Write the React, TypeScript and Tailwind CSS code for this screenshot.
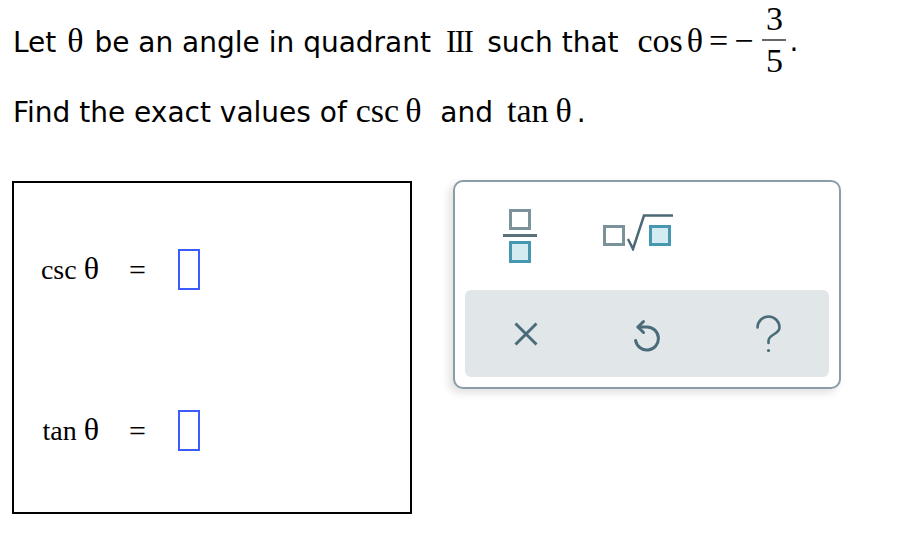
const sans = "font-['DejaVu_Sans',Verdana,sans-serif]";
const serif = "font-['Liberation_Serif','Times_New_Roman',serif]";

function Fraction() {
  return (
    <span className={`${serif} mb-[3px] flex flex-col items-center text-[34px] leading-[38px]`}>
      <span>3</span>
      <span className="mt-[1px] mb-[1px] h-[2px] w-[24px] bg-[#666]" />
      <span>5</span>
    </span>
  );
}

function AnswerRow({ fn, className }: { fn: string; className?: string }) {
  return (
    <div className={`flex items-center ${className ?? ""}`}>
      <span className={`${serif} w-[85px] text-right text-[28px] leading-[41px]`}>
        {fn} <span className="text-[32px]">θ</span>
      </span>
      <span className={`${serif} ml-[30px] text-[30px] leading-[41px]`}>=</span>
      <span className="ml-[32px] h-[41px] w-[22px] border-2 border-[#3b5bfd]" />
    </div>
  );
}

function FractionIcon() {
  return (
    <svg width="34" height="54" viewBox="0 0 34 54">
      <rect x="7.5" y="1.5" width="19" height="18" fill="none" stroke="#7b929b" strokeWidth="3" />
      <rect x="0" y="25" width="34" height="3" fill="#5a717c" />
      <rect x="7.5" y="33.5" width="19" height="19" fill="#d3ebf1" stroke="#4598af" strokeWidth="3" />
    </svg>
  );
}

function SqrtIcon() {
  return (
    <svg width="70" height="37" viewBox="0 0 70 37">
      <rect x="1.5" y="12.5" width="19" height="18" fill="none" stroke="#7b929b" strokeWidth="3" />
      <polyline points="25,25 30,35 41,1.5 70,1.5" fill="none" stroke="#4b6976" strokeWidth="2.5" />
      <rect x="47.5" y="12.5" width="19" height="18" fill="#d3ebf1" stroke="#4598af" strokeWidth="3" />
    </svg>
  );
}

export default function App() {
  return (
    <div className="min-h-[554px] bg-white pl-[12px] text-black">
      {/* question text */}
      <div className={`${sans} flex items-center pl-[1px] text-[28px]`}>
        <span className="leading-[34px]">
          Let <span className={`${serif} mx-[2px] text-[34px]`}>θ</span> be an angle in quadrant{" "}
          <span className={`${serif} ml-[6px] mr-[6px] text-[31px] tracking-[-1.5px]`}>III</span> such that{" "}
          <span className={`${serif} ml-[10px] text-[34px]`}>cos</span>
          <span className={`${serif} ml-[4px] text-[34px]`}>θ</span>
          <span className={`${serif} ml-[6px] text-[34px]`}>=</span>
          <span className={`${serif} ml-[6px] text-[34px]`}>−</span>
        </span>
        <span className="ml-[9px]">
          <Fraction />
        </span>
        <span className="ml-[3px] leading-[34px]">.</span>
      </div>
      <p className={`${sans} mt-[11px] pl-[1px] text-[28px] leading-[34px]`}>
        Find the exact values of{" "}
        <span className={`${serif} mr-[10px] text-[34px]`}>
          csc<span className="ml-[6px]">θ</span>
        </span>{" "}
        and{" "}
        <span className={`${serif} ml-[5px] mr-[5px] text-[34px]`}>
          tan<span className="ml-[7px]">θ</span>
        </span>
        .
      </p>

      <div className="mt-[50px] flex items-start">
        {/* answer box */}
        <div className="mt-[1px] flex h-[333px] w-[400px] flex-col border-2 border-black pt-[65px]">
          <AnswerRow fn="csc" />
          <AnswerRow fn="tan" className="mt-[119px]" />
        </div>

        {/* keypad */}
        <div className="ml-[41px] flex w-[388px] flex-col rounded-[10px] border-2 border-[#8a9ea7] bg-white pb-[10px] shadow-[-4px_4px_8px_rgba(0,0,0,0.12)]">
          <div className="flex h-[108px] items-center pl-[6px]">
            <button className="flex w-[118px] justify-center">
              <FractionIcon />
            </button>
            <button className="mb-[8px] flex w-[118px] justify-center">
              <SqrtIcon />
            </button>
          </div>
          <div className="mx-[10px] grid h-[87px] grid-cols-3 items-center justify-items-center rounded-[6px] bg-[#e1e6e9]">
            <svg width="24" height="24" viewBox="0 0 24 24" fill="none" stroke="#4a6b79" strokeWidth="3">
              <path d="M1.5 1.5 L22.5 22.5 M22.5 1.5 L1.5 22.5" />
            </svg>
            <svg width="28" height="36" viewBox="0 0 28 36" fill="none" stroke="#4a6b79" strokeWidth="3" strokeLinecap="round" strokeLinejoin="round">
              <path d="M5 11 H14 A11.5 11.5 0 1 1 2.6 24.5" />
              <path d="M10.5 5.5 L5 11 L10.5 16.5" />
            </svg>
            <svg width="28" height="40" viewBox="0 0 28 40" fill="none" stroke="#4a6b79" strokeWidth="2.6" strokeLinecap="round">
              <path d="M3.5 13.5 A11 11 0 0 1 25.5 13.5 C25.5 20.5 14.5 20 14.5 27 V29" />
              <circle cx="14.5" cy="36.5" r="1.6" fill="#4a6b79" stroke="none" />
            </svg>
          </div>
        </div>
      </div>
    </div>
  );
}
